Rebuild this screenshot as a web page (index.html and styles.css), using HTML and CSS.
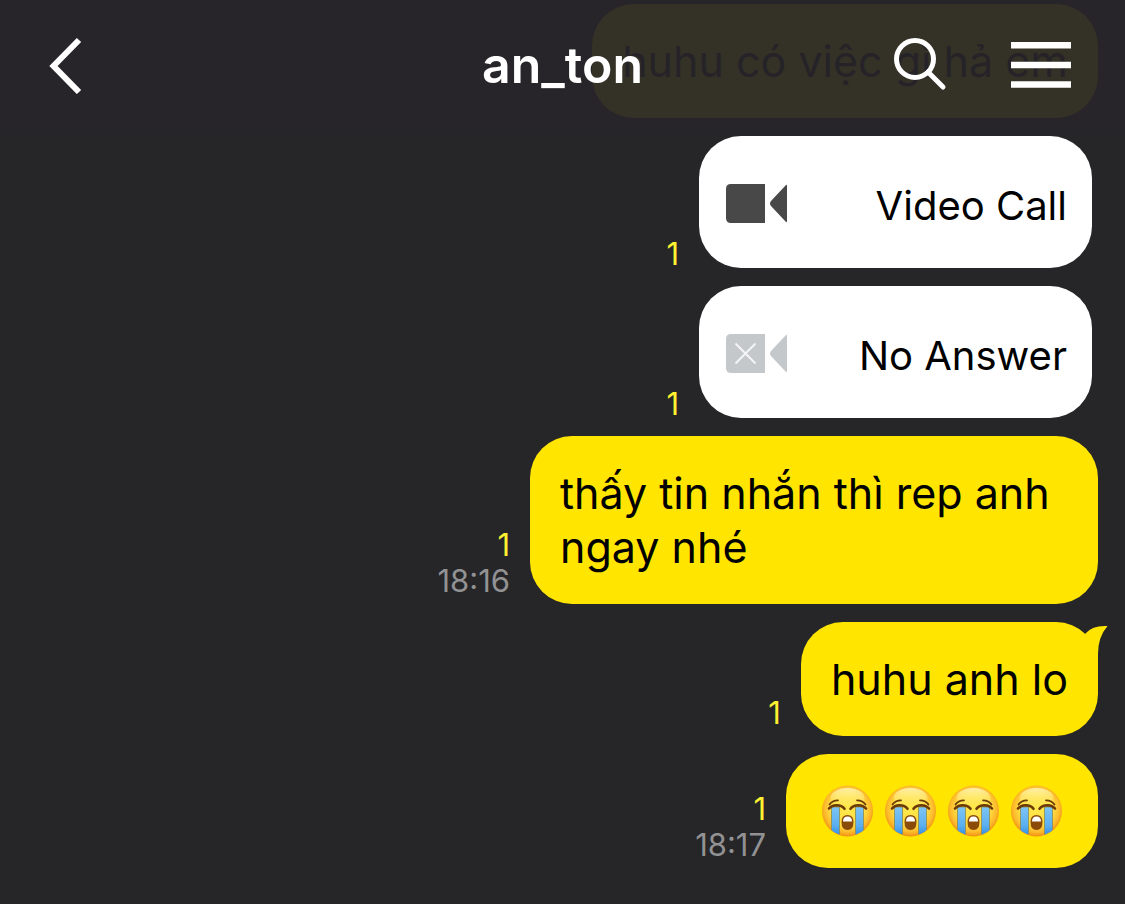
FILE: index.html
```html
<!DOCTYPE html>
<html lang="vi">
<head>
    <meta charset="UTF-8">
    <meta name="viewport" content="width=device-width, initial-scale=1.0">
    <title>an_ton</title>
    <link rel="stylesheet" href="styles.css">
</head>
<body>
    <!-- shared shapes -->
    <svg class="defs" aria-hidden="true">
        <defs>
            <radialGradient id="face" cx="50%" cy="46%" r="55%">
                <stop offset="0" stop-color="#ffe94a"/>
                <stop offset="0.6" stop-color="#ffdc42"/>
                <stop offset="0.82" stop-color="#fdbb2c"/>
                <stop offset="1" stop-color="#ee8a12"/>
            </radialGradient>
            <linearGradient id="shine" x1="0" y1="0" x2="0" y2="1">
                <stop offset="0" stop-color="#fff9c4" stop-opacity="0.8"/>
                <stop offset="1" stop-color="#fff27a" stop-opacity="0"/>
            </linearGradient>
            <linearGradient id="tear" x1="0" y1="0" x2="0" y2="1">
                <stop offset="0" stop-color="#7cc4f4"/>
                <stop offset="0.6" stop-color="#5cb0f0"/>
                <stop offset="1" stop-color="#2e8ae0"/>
            </linearGradient>
            <clipPath id="faceClip"><circle cx="31.5" cy="27" r="25"/></clipPath>
        </defs>
        <symbol id="cry" viewBox="0 0 63 54">
            <circle cx="31.5" cy="27" r="25.5" fill="url(#face)"/>
            <ellipse cx="31.5" cy="14" rx="17" ry="10" fill="url(#shine)"/>
            <g clip-path="url(#faceClip)">
                <rect x="15.500" y="23" width="8" height="30" fill="url(#tear)" stroke="#8b8a55" stroke-width="0.8"/>
                <rect x="39.5" y="23" width="8" height="30" fill="url(#tear)" stroke="#8b8a55" stroke-width="0.8"/>
            </g>
            <path d="M13 24.500Q15.500 21.500 20.500 21.300Q26 21.300 28.500 24.800M34.500 24.800Q37 21.300 42.500 21.300Q47.500 21.500 50 24.500" fill="none" stroke="#6b3a06" stroke-width="2.600" stroke-linecap="round"/>
            <path d="M13.500 20.500Q16 16.500 22 16.300M41 16.300Q47 16.500 49.500 20.500" fill="none" stroke="#6b3a06" stroke-width="1.700" stroke-linecap="round"/>
            <path d="M25.500 38Q25.500 31 31.500 31T37.500 38Q37.500 46 31.500 46T25.500 38z" fill="#8a4a08"/>
            <path d="M27 37.500Q27 32.500 31.500 32.500T36 37.500z" fill="#fff"/>
        </symbol>
    </svg>

    <header class="topbar">
        <button class="icon-btn back" aria-label="Back">
            <svg width="34" height="58" viewBox="0 0 34 58"><path d="M31 4L5.500 30L31 56" fill="none" stroke="#fff" stroke-width="6"/></svg>
        </button>
        <h1>an_ton</h1>
        <div class="actions">
            <button class="icon-btn" aria-label="Search">
                <svg width="54" height="54" viewBox="0 0 54 54" fill="none" stroke="#fff" stroke-width="5"><circle cx="22" cy="21" r="18.500"/><path d="M35 34L50 49" stroke-linecap="round"/></svg>
            </button>
            <button class="icon-btn" aria-label="Menu">
                <svg width="60" height="46" viewBox="0 0 60 46" fill="#fff"><path d="M0 0h60v6.500H0zM0 19.700h60v6.500H0zM0 39.200h60v6.500H0z"/></svg>
            </button>
        </div>
    </header>

    <main class="chat">
        <div class="row">
            <div class="bubble">huhu có việc gì hả em</div>
        </div>

        <div class="row call-row">
            <div class="meta"><span class="unread">1</span></div>
            <div class="bubble call">
                <svg width="62" height="40" viewBox="0 0 62 40" fill="#484848"><path d="M5 0H39V39H5Q0 39 0 34V5Q0 0 5 0zM61 2V37Q61 39 59.500 37.500L45 22Q43 19.500 45 17L59.500 1.500Q61 0 61 2z"/></svg>
                <span>Video Call</span>
            </div>
        </div>

        <div class="row call-row">
            <div class="meta"><span class="unread">1</span></div>
            <div class="bubble call">
                <svg width="62" height="40" viewBox="0 0 62 40" fill="#c4c8cb"><path d="M5 0H39V39H5Q0 39 0 34V5Q0 0 5 0zM61 2V37Q61 39 59.500 37.500L45 22Q43 19.500 45 17L59.500 1.500Q61 0 61 2z"/><path d="M9.500 9.500L29.500 29.500M29.500 9.500L9.500 29.500" stroke="#f4f5f6" stroke-width="1.900"/></svg>
                <span>No Answer</span>
            </div>
        </div>

        <div class="row">
            <div class="meta"><span class="unread">1</span><time>18:16</time></div>
            <div class="bubble">thấy tin nhắn thì rep anh ngay nhé</div>
        </div>

        <div class="row">
            <div class="meta"><span class="unread">1</span></div>
            <div class="bubble">
                huhu anh lo
                <svg class="tail" width="30" height="44" viewBox="0 0 30 44"><path d="M4 16L8 11Q15 3 29.500 4Q20 15 20 32V44H12z" fill="#ffe500"/></svg>
            </div>
        </div>

        <div class="row">
            <div class="meta"><span class="unread">1</span><time>18:17</time></div>
            <div class="bubble emojis" role="img" aria-label="😭😭😭😭">
                <svg><use href="#cry"/></svg>
                <svg><use href="#cry"/></svg>
                <svg><use href="#cry"/></svg>
                <svg><use href="#cry"/></svg>
            </div>
        </div>
    </main>
</body>
</html>
```
FILE: styles.css
```css
* {
    box-sizing: border-box;
}
body {
    margin: 0;
    min-height: 100vh;
    background: #262628;
    color: #000;
    font-family: Inter, "Liberation Sans", sans-serif;
}
svg {
    display: block;
    flex: none;
}
.defs {
    position: absolute;
    width: 0;
    height: 0;
}

/* header floats over the scrolling messages */
.topbar {
    position: fixed;
    top: 0;
    left: 0;
    right: 0;
    z-index: 1;
    height: 130px;
    padding: 0 48px;
    display: grid;
    grid-template-columns: 1fr auto 1fr;
    align-items: center;
    background: rgba(39, 37, 41, 0.94);
}
.topbar h1 {
    margin: 0;
    color: #fff;
    font-size: 50px;
    font-weight: 600;
}
.icon-btn {
    padding: 0;
    border: none;
    background: none;
    cursor: pointer;
}
.back {
    justify-self: start;
}
.actions {
    display: flex;
    align-items: center;
    justify-content: flex-end;
    gap: 64px;
    padding-right: 6px;
}

.chat {
    display: flex;
    flex-direction: column;
    gap: 18px;
    padding: 4px 27px 36px;
}
.row {
    display: flex;
    justify-content: flex-end;
    align-items: flex-end;
    gap: 20px;
}
.call-row {
    padding-right: 6px;
}
.bubble {
    position: relative;
    max-width: 568px;
    padding: 30px;
    border-radius: 42px;
    background: #ffe500;
    font-size: 43px;
    line-height: 54px;
}
.call {
    display: flex;
    justify-content: space-between;
    align-items: center;
    width: 393px;
    padding: 43px 25px 35px 27px;
    background: #fff;
    font-size: 40px;
}
.call svg {
    margin-bottom: 4px;
}
.emojis {
    display: flex;
}
.emojis svg {
    width: 63px;
    height: 54px;
}
.tail {
    position: absolute;
    top: 0;
    right: -10px;
}
.meta {
    display: flex;
    flex-direction: column;
    align-items: flex-end;
    padding-bottom: 5px;
    color: #929294;
    font-size: 31px;
    line-height: 36px;
}
.call-row .meta {
    padding-bottom: 0;
    line-height: 28px;
}
.unread {
    color: #fff031;
}
```
